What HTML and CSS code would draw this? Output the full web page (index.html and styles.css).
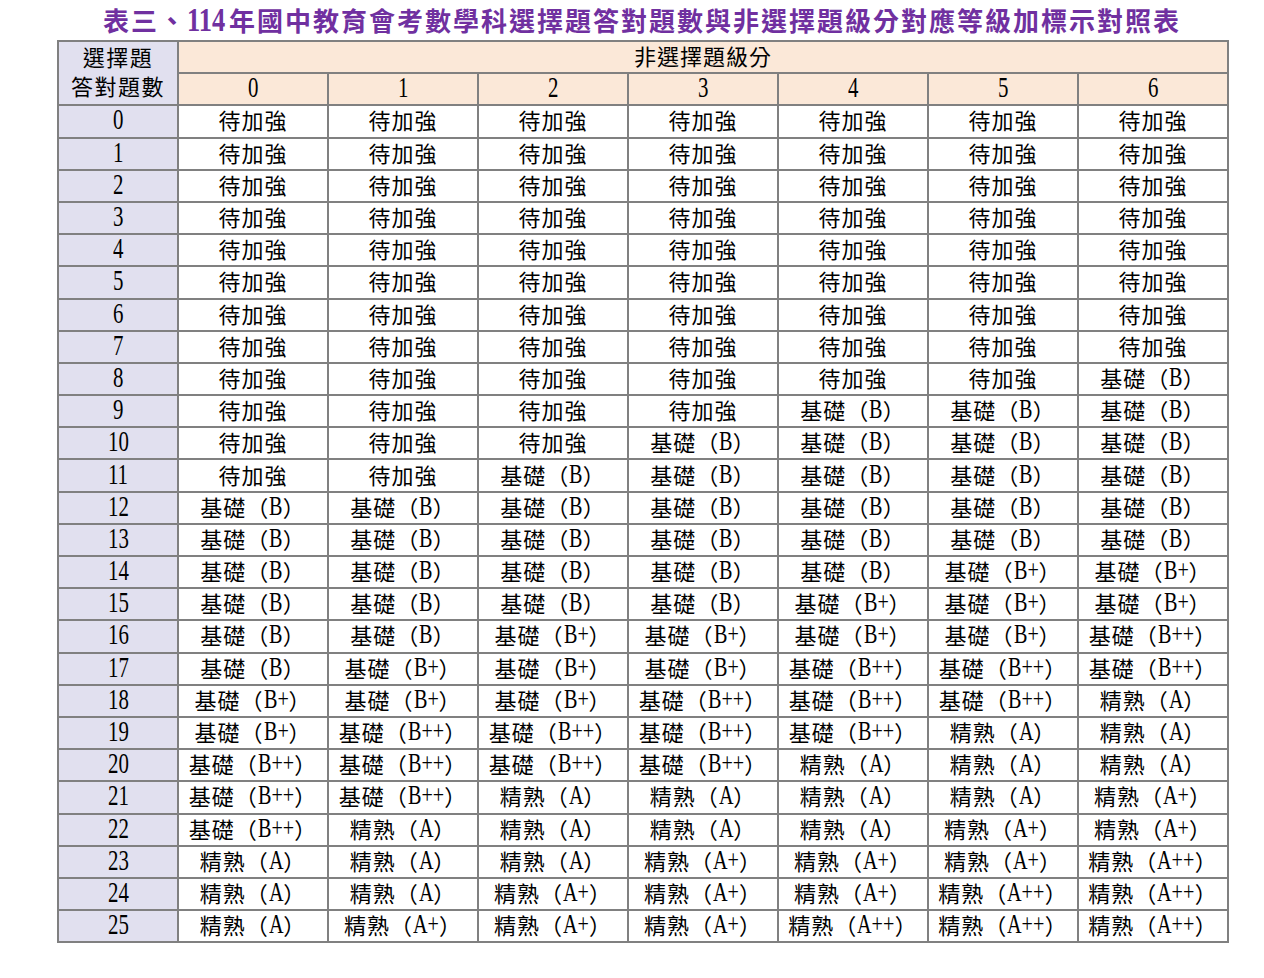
FILE: index.html
```html
<!DOCTYPE html>
<html lang="zh-Hant">
<head>
<meta charset="utf-8">
<title>表三、114年國中教育會考數學科選擇題答對題數與非選擇題級分對應等級加標示對照表</title>
<link rel="stylesheet" href="styles.css">
</head>
<body>
<div class="page">
<h1 class="title">表三、<span class="tn">114</span>年國中教育會考數學科選擇題答對題數與非選擇題級分對應等級加標示對照表</h1>
<table class="grid">
<colgroup><col class="c-first"><col class="c"><col class="c"><col class="c"><col class="c"><col class="c"><col class="c"><col class="c"></colgroup>
<thead>
<tr><th class="side" rowspan="2"><div class="side-h">選擇題<br>答對題數</div></th><th class="head" colspan="7">非選擇題級分</th></tr>
<tr><th class="head"><span class="n">0</span></th><th class="head"><span class="n">1</span></th><th class="head"><span class="n">2</span></th><th class="head"><span class="n">3</span></th><th class="head"><span class="n">4</span></th><th class="head"><span class="n">5</span></th><th class="head"><span class="n">6</span></th></tr>
</thead>
<tbody>
<tr><th class="side"><span class="n">0</span></th><td>待加強</td><td>待加強</td><td>待加強</td><td>待加強</td><td>待加強</td><td>待加強</td><td>待加強</td></tr>
<tr><th class="side"><span class="n">1</span></th><td>待加強</td><td>待加強</td><td>待加強</td><td>待加強</td><td>待加強</td><td>待加強</td><td>待加強</td></tr>
<tr><th class="side"><span class="n">2</span></th><td>待加強</td><td>待加強</td><td>待加強</td><td>待加強</td><td>待加強</td><td>待加強</td><td>待加強</td></tr>
<tr><th class="side"><span class="n">3</span></th><td>待加強</td><td>待加強</td><td>待加強</td><td>待加強</td><td>待加強</td><td>待加強</td><td>待加強</td></tr>
<tr><th class="side"><span class="n">4</span></th><td>待加強</td><td>待加強</td><td>待加強</td><td>待加強</td><td>待加強</td><td>待加強</td><td>待加強</td></tr>
<tr><th class="side"><span class="n">5</span></th><td>待加強</td><td>待加強</td><td>待加強</td><td>待加強</td><td>待加強</td><td>待加強</td><td>待加強</td></tr>
<tr><th class="side"><span class="n">6</span></th><td>待加強</td><td>待加強</td><td>待加強</td><td>待加強</td><td>待加強</td><td>待加強</td><td>待加強</td></tr>
<tr><th class="side"><span class="n">7</span></th><td>待加強</td><td>待加強</td><td>待加強</td><td>待加強</td><td>待加強</td><td>待加強</td><td>待加強</td></tr>
<tr><th class="side"><span class="n">8</span></th><td>待加強</td><td>待加強</td><td>待加強</td><td>待加強</td><td>待加強</td><td>待加強</td><td>基礎（<span class="l b1">B</span>）</td></tr>
<tr><th class="side"><span class="n">9</span></th><td>待加強</td><td>待加強</td><td>待加強</td><td>待加強</td><td>基礎（<span class="l b1">B</span>）</td><td>基礎（<span class="l b1">B</span>）</td><td>基礎（<span class="l b1">B</span>）</td></tr>
<tr><th class="side"><span class="n">10</span></th><td>待加強</td><td>待加強</td><td>待加強</td><td>基礎（<span class="l b1">B</span>）</td><td>基礎（<span class="l b1">B</span>）</td><td>基礎（<span class="l b1">B</span>）</td><td>基礎（<span class="l b1">B</span>）</td></tr>
<tr><th class="side"><span class="n">11</span></th><td>待加強</td><td>待加強</td><td>基礎（<span class="l b1">B</span>）</td><td>基礎（<span class="l b1">B</span>）</td><td>基礎（<span class="l b1">B</span>）</td><td>基礎（<span class="l b1">B</span>）</td><td>基礎（<span class="l b1">B</span>）</td></tr>
<tr><th class="side"><span class="n">12</span></th><td>基礎（<span class="l b1">B</span>）</td><td>基礎（<span class="l b1">B</span>）</td><td>基礎（<span class="l b1">B</span>）</td><td>基礎（<span class="l b1">B</span>）</td><td>基礎（<span class="l b1">B</span>）</td><td>基礎（<span class="l b1">B</span>）</td><td>基礎（<span class="l b1">B</span>）</td></tr>
<tr><th class="side"><span class="n">13</span></th><td>基礎（<span class="l b1">B</span>）</td><td>基礎（<span class="l b1">B</span>）</td><td>基礎（<span class="l b1">B</span>）</td><td>基礎（<span class="l b1">B</span>）</td><td>基礎（<span class="l b1">B</span>）</td><td>基礎（<span class="l b1">B</span>）</td><td>基礎（<span class="l b1">B</span>）</td></tr>
<tr><th class="side"><span class="n">14</span></th><td>基礎（<span class="l b1">B</span>）</td><td>基礎（<span class="l b1">B</span>）</td><td>基礎（<span class="l b1">B</span>）</td><td>基礎（<span class="l b1">B</span>）</td><td>基礎（<span class="l b1">B</span>）</td><td>基礎（<span class="l b2">B+</span>）</td><td>基礎（<span class="l b2">B+</span>）</td></tr>
<tr><th class="side"><span class="n">15</span></th><td>基礎（<span class="l b1">B</span>）</td><td>基礎（<span class="l b1">B</span>）</td><td>基礎（<span class="l b1">B</span>）</td><td>基礎（<span class="l b1">B</span>）</td><td>基礎（<span class="l b2">B+</span>）</td><td>基礎（<span class="l b2">B+</span>）</td><td>基礎（<span class="l b2">B+</span>）</td></tr>
<tr><th class="side"><span class="n">16</span></th><td>基礎（<span class="l b1">B</span>）</td><td>基礎（<span class="l b1">B</span>）</td><td>基礎（<span class="l b2">B+</span>）</td><td>基礎（<span class="l b2">B+</span>）</td><td>基礎（<span class="l b2">B+</span>）</td><td>基礎（<span class="l b2">B+</span>）</td><td>基礎（<span class="l b3">B++</span>）</td></tr>
<tr><th class="side"><span class="n">17</span></th><td>基礎（<span class="l b1">B</span>）</td><td>基礎（<span class="l b2">B+</span>）</td><td>基礎（<span class="l b2">B+</span>）</td><td>基礎（<span class="l b2">B+</span>）</td><td>基礎（<span class="l b3">B++</span>）</td><td>基礎（<span class="l b3">B++</span>）</td><td>基礎（<span class="l b3">B++</span>）</td></tr>
<tr><th class="side"><span class="n">18</span></th><td>基礎（<span class="l b2">B+</span>）</td><td>基礎（<span class="l b2">B+</span>）</td><td>基礎（<span class="l b2">B+</span>）</td><td>基礎（<span class="l b3">B++</span>）</td><td>基礎（<span class="l b3">B++</span>）</td><td>基礎（<span class="l b3">B++</span>）</td><td>精熟（<span class="l a1">A</span>）</td></tr>
<tr><th class="side"><span class="n">19</span></th><td>基礎（<span class="l b2">B+</span>）</td><td>基礎（<span class="l b3">B++</span>）</td><td>基礎（<span class="l b3">B++</span>）</td><td>基礎（<span class="l b3">B++</span>）</td><td>基礎（<span class="l b3">B++</span>）</td><td>精熟（<span class="l a1">A</span>）</td><td>精熟（<span class="l a1">A</span>）</td></tr>
<tr><th class="side"><span class="n">20</span></th><td>基礎（<span class="l b3">B++</span>）</td><td>基礎（<span class="l b3">B++</span>）</td><td>基礎（<span class="l b3">B++</span>）</td><td>基礎（<span class="l b3">B++</span>）</td><td>精熟（<span class="l a1">A</span>）</td><td>精熟（<span class="l a1">A</span>）</td><td>精熟（<span class="l a1">A</span>）</td></tr>
<tr><th class="side"><span class="n">21</span></th><td>基礎（<span class="l b3">B++</span>）</td><td>基礎（<span class="l b3">B++</span>）</td><td>精熟（<span class="l a1">A</span>）</td><td>精熟（<span class="l a1">A</span>）</td><td>精熟（<span class="l a1">A</span>）</td><td>精熟（<span class="l a1">A</span>）</td><td>精熟（<span class="l a2">A+</span>）</td></tr>
<tr><th class="side"><span class="n">22</span></th><td>基礎（<span class="l b3">B++</span>）</td><td>精熟（<span class="l a1">A</span>）</td><td>精熟（<span class="l a1">A</span>）</td><td>精熟（<span class="l a1">A</span>）</td><td>精熟（<span class="l a1">A</span>）</td><td>精熟（<span class="l a2">A+</span>）</td><td>精熟（<span class="l a2">A+</span>）</td></tr>
<tr><th class="side"><span class="n">23</span></th><td>精熟（<span class="l a1">A</span>）</td><td>精熟（<span class="l a1">A</span>）</td><td>精熟（<span class="l a1">A</span>）</td><td>精熟（<span class="l a2">A+</span>）</td><td>精熟（<span class="l a2">A+</span>）</td><td>精熟（<span class="l a2">A+</span>）</td><td>精熟（<span class="l a3">A++</span>）</td></tr>
<tr><th class="side"><span class="n">24</span></th><td>精熟（<span class="l a1">A</span>）</td><td>精熟（<span class="l a1">A</span>）</td><td>精熟（<span class="l a2">A+</span>）</td><td>精熟（<span class="l a2">A+</span>）</td><td>精熟（<span class="l a2">A+</span>）</td><td>精熟（<span class="l a3">A++</span>）</td><td>精熟（<span class="l a3">A++</span>）</td></tr>
<tr><th class="side"><span class="n">25</span></th><td>精熟（<span class="l a1">A</span>）</td><td>精熟（<span class="l a2">A+</span>）</td><td>精熟（<span class="l a2">A+</span>）</td><td>精熟（<span class="l a2">A+</span>）</td><td>精熟（<span class="l a3">A++</span>）</td><td>精熟（<span class="l a3">A++</span>）</td><td>精熟（<span class="l a3">A++</span>）</td></tr>
</tbody>
</table>
</div>
</body>
</html>
```

FILE: styles.css
```css
html, body {
  margin: 0;
  padding: 0;
  background: #ffffff;
}

body {
  font-family: "Noto Sans CJK TC", "Noto Sans CJK JP", sans-serif;
  color: #000000;
}

.page {
  margin-left: 57px;
  width: 1170px;
}

.title {
  margin: 0;
  height: 40px;
  line-height: 40px;
  text-align: center;
  color: #7030a0;
  font-size: 26px;
  font-weight: 700;
  letter-spacing: 2px;
  white-space: nowrap;
}

.tn {
  display: inline-block;
  width: 40px;
  font-family: "Liberation Serif", serif;
  font-size: 33px;
  font-weight: 700;
  letter-spacing: 0;
  line-height: 40px;
  vertical-align: top;
  transform: scaleX(0.8);
  transform-origin: left center;
  margin-right: 2px;
}

.grid {
  border-collapse: collapse;
  table-layout: fixed;
  width: 1170px;
}

.c-first {
  width: 120px;
}

.c {
  width: 150px;
}

.grid th,
.grid td {
  border: 2px solid #808080;
  padding: 0 0 4px 0;
  height: 26.2px;
  text-align: center;
  font-size: 22px;
  font-weight: 400;
  line-height: 24px;
  letter-spacing: 1px;
  white-space: nowrap;
}

.grid td {
  background: #ffffff;
}

.side {
  background: #e1e0ef;
}

.head {
  background: #fbe8d8;
}

.side-h {
  line-height: 29px;
  letter-spacing: 1.5px;
}

.n {
  display: inline-block;
  font-family: "Liberation Serif", serif;
  font-size: 29px;
  letter-spacing: 0;
  line-height: 24px;
  vertical-align: top;
  transform: scaleX(0.72);
}

.l {
  display: inline-block;
  font-family: "Liberation Serif", serif;
  font-size: 28px;
  letter-spacing: 0;
  line-height: 24px;
  vertical-align: top;
  transform: scaleX(0.72);
  transform-origin: left center;
  text-align: left;
}

.b1 { width: 13.5px; }
.b2 { width: 25px; }
.b3 { width: 36.5px; }
.a1 { width: 14.5px; }
.a2 { width: 26px; }
.a3 { width: 37.5px; }
```
